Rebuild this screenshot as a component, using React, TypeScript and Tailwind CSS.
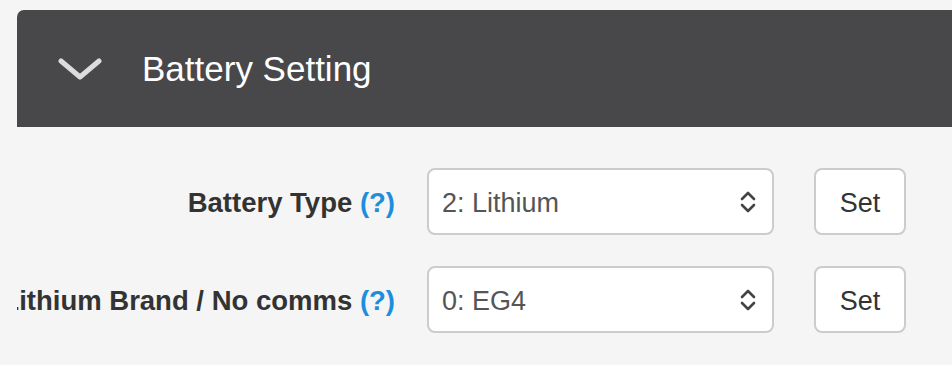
export default function App() {
  return (
    <div className="w-[952px] h-[365px] overflow-hidden bg-[#f5f5f5] pt-[10px] pl-[17px] font-['Liberation_Sans',Arial,sans-serif]">
      {/* header */}
      <div className="h-[117px] bg-[#48484a] rounded-tl-[7px] flex items-center">
        <svg className="ml-[41px] w-[44px] h-[26px]" viewBox="0 0 44 26" fill="none">
          <path d="M3 5 L22 21 L41 5" stroke="#dcdcdc" strokeWidth="5" strokeLinecap="round" strokeLinejoin="round" />
        </svg>
        <span className="ml-[40px] text-white text-[35px] leading-none">Battery Setting</span>
      </div>

      {/* settings */}
      <div className="pt-[41px] flex flex-col gap-[31px]">
        <Row label="Battery Type" value="2: Lithium" />
        <Row label="Lithium Brand / No comms" value="0: EG4" />
      </div>
    </div>
  );
}

function Row({ label, value }: { label: string; value: string }) {
  return (
    <div className="flex items-center h-[67px]">
      <div className="w-[378px] flex justify-end overflow-hidden">
        <span className="whitespace-nowrap text-[27.5px] font-bold text-[#333333] pt-[2px]">
          {label} <span className="text-[#1d8ede]">(?)</span>
        </span>
      </div>
      <div className="ml-[32px] w-[347px] h-[67px] bg-white border-2 border-[#cccccc] rounded-[8px] flex items-center justify-between pl-[13px] pr-[16px]">
        <span className="text-[27px] text-[#555555] pt-[4px]">{value}</span>
        <svg className="w-[16px] h-[24px]" viewBox="0 0 16 24" fill="none">
          <path d="M2 9 L8 3 L14 9 M2 15 L8 21 L14 15" stroke="#444444" strokeWidth="2.6" strokeLinecap="round" strokeLinejoin="round" />
        </svg>
      </div>
      <button className="ml-[40px] w-[92px] h-[67px] bg-white border-2 border-[#cccccc] rounded-[8px] text-[27px] text-[#333333] pt-[3px]">
        Set
      </button>
    </div>
  );
}
